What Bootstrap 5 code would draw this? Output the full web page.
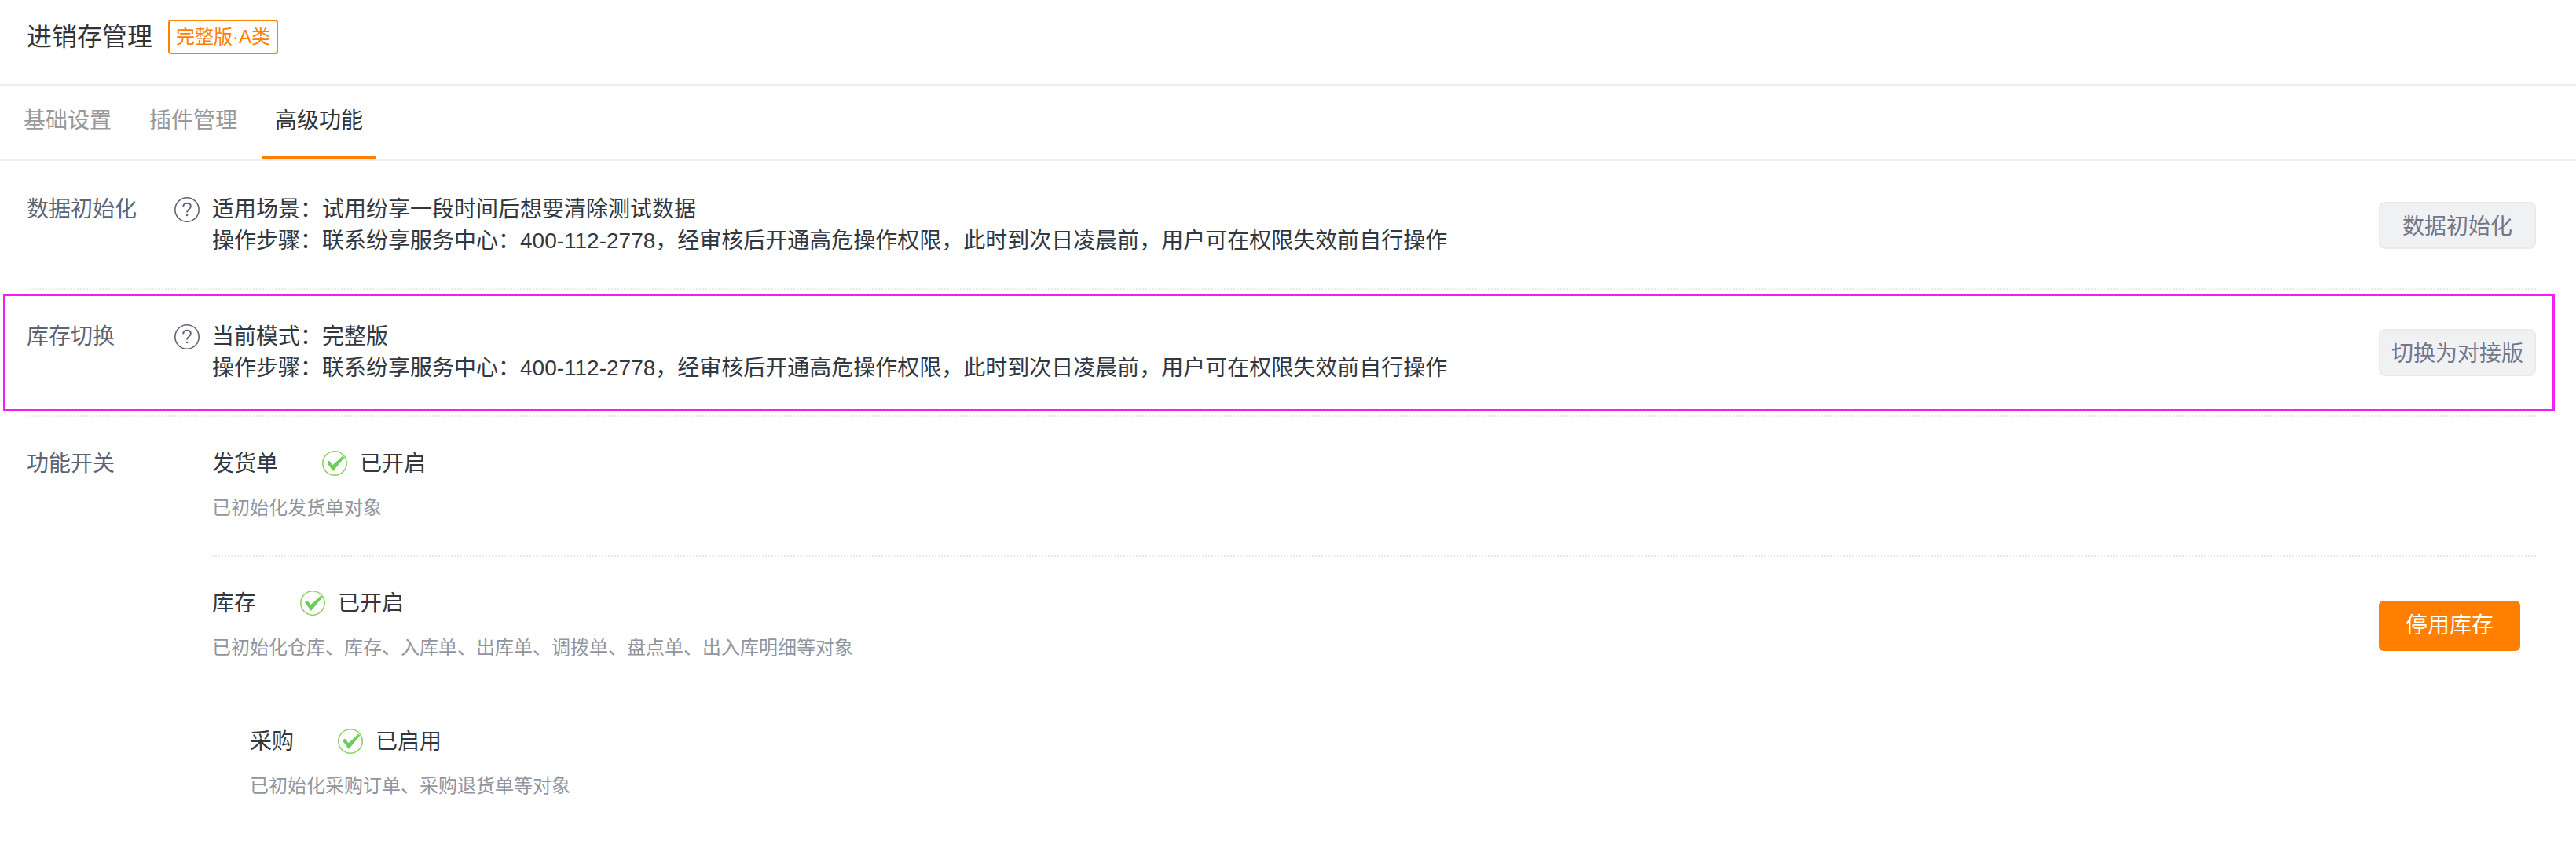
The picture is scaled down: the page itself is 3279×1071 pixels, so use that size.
<!DOCTYPE html>
<html lang="zh-CN">

<head>
  <meta charset="utf-8">
  <meta name="viewport" content="width=device-width">
  <title>进销存管理</title>
  <link href="https://cdn.jsdelivr.net/npm/bootstrap@5.3.3/dist/css/bootstrap.min.css" rel="stylesheet"/>
  <style>
    body {
      font-family: "Liberation Sans", "Noto Sans CJK SC", sans-serif;
      font-size: 28px;
      line-height: 40px;
      color: #333840;
      background: #fff;
    }
    .page-head { height: 109px; padding: 25px 34px 0; border-bottom: 2px solid #eee; }
    .page-title { font-size: 32px; line-height: 44px; font-weight: 400; color: #333; }
    .version-tag {
      height: 44px;
      margin-left: 20px;
      padding: 0 8px;
      font-size: 24px;
      line-height: 40px;
      color: #ff8000;
      border: 2px solid #ff8000;
      border-radius: 4px;
    }
    .page-tabs { height: 96px; padding: 0 14px; gap: 16px; border-bottom: 2px solid #eee; }
    .page-tabs .nav-link {
      height: 94px;
      padding: 25px 16px 0;
      color: #999;
      border-bottom: 4px solid transparent;
    }
    .page-tabs .nav-link.active { color: #333; border-bottom-color: #ff8000; }
    .settings { padding: 2px 51px 0 34px; }
    .setting-row { padding: 40px 0; }
    .dotted-line {
      height: 2px;
      background: repeating-linear-gradient(90deg, #eaeaec 0 2px, transparent 2px 4px);
    }
    .setting-label { width: 188px; color: #5f6472; }
    .help-cell { width: 48px; padding-top: 4px; }
    .highlight-box { inset: 5px -24px 5px -30px; border: 3px solid #f51df5; }
    .btn-side {
      width: 200px;
      height: 60px;
      padding: 3px 0 0;
      font-size: 28px;
      color: #737789;
      background: #f0f1f3;
      border: 2px solid #e9eaee;
      border-radius: 8px;
    }
    .btn-stop {
      width: 180px;
      height: 64px;
      margin-right: 20px;
      padding: 0;
      font-size: 28px;
      color: #fff;
      background: #ff8000;
      border: 0;
      border-radius: 6px;
    }
    .feature-row { padding: 40px 0; height: 176px; }
    .feature-row .state-icon { margin: 0 16px 2px 56px; }
    .feature-note { margin-top: 16px; font-size: 24px; color: #91959e; }
    .sub-feature { padding-left: 48px; }
    svg { display: block; }
  </style>
</head>

<body>

  <svg class="d-none">
    <symbol id="icon-help" viewBox="0 0 32 32">
      <circle cx="16" cy="16" r="15.2" fill="none" stroke="#5f6472" stroke-width="1.6"/>
      <path d="M11.2 12.4C11.3 9.5 13.1 7.8 16 7.8c2.9 0 4.8 1.6 4.8 4 0 1.9-1 2.9-2.5 4-1.5 1.1-2.2 1.9-2.2 3.7" fill="none" stroke="#5f6472" stroke-width="1.9"/>
      <circle cx="16.1" cy="23" r="1.3" fill="#5f6472"/>
    </symbol>
    <symbol id="icon-done" viewBox="0 0 32 32">
      <circle cx="16" cy="16" r="15.2" fill="none" stroke="#8fcf62" stroke-width="1.6"/>
      <path d="M6.5 15.2 9 13.2 13.6 18.6 26 7.4 27.8 8.6 14 25.4Z" fill="#6cce58" stroke="#6cce58" stroke-width="1"/>
    </symbol>
  </svg>

  <header class="page-head d-flex align-items-start">
    <h1 class="page-title mb-0">进销存管理</h1>
    <span class="version-tag">完整版·A类</span>
  </header>

  <nav class="page-tabs nav flex-nowrap">
    <a class="nav-link" href="#">基础设置</a>
    <a class="nav-link" href="#">插件管理</a>
    <a class="nav-link active" href="#">高级功能</a>
  </nav>

  <main class="settings">
    <section class="setting-row d-flex">
      <div class="setting-label">数据初始化</div>
      <div class="help-cell"><svg width="32" height="32"><use href="#icon-help"/></svg></div>
      <div class="flex-grow-1">
        <div>适用场景：试用纷享一段时间后想要清除测试数据</div>
        <div>操作步骤：联系纷享服务中心：400-112-2778，经审核后开通高危操作权限，此时到次日凌晨前，用户可在权限失效前自行操作</div>
      </div>
      <button class="btn btn-side align-self-center" type="button">数据初始化</button>
    </section>
    <div class="dotted-line"></div>

    <section class="setting-row d-flex position-relative">
      <div class="highlight-box position-absolute pe-none"></div>
      <div class="setting-label">库存切换</div>
      <div class="help-cell"><svg width="32" height="32"><use href="#icon-help"/></svg></div>
      <div class="flex-grow-1">
        <div>当前模式：完整版</div>
        <div>操作步骤：联系纷享服务中心：400-112-2778，经审核后开通高危操作权限，此时到次日凌晨前，用户可在权限失效前自行操作</div>
      </div>
      <button class="btn btn-side align-self-center" type="button">切换为对接版</button>
    </section>
    <div class="dotted-line"></div>

    <section class="d-flex">
      <div class="setting-label feature-row">功能开关</div>
      <div class="help-cell"></div>
      <div class="flex-grow-1">
        <div class="feature-row">
          <div class="d-flex align-items-center">
            <span>发货单</span>
            <svg class="state-icon" width="32" height="32"><use href="#icon-done"/></svg>
            <span>已开启</span>
          </div>
          <div class="feature-note">已初始化发货单对象</div>
        </div>
        <div class="dotted-line"></div>
        <div class="feature-row d-flex justify-content-between">
          <div>
            <div class="d-flex align-items-center">
              <span>库存</span>
              <svg class="state-icon" width="32" height="32"><use href="#icon-done"/></svg>
              <span>已开启</span>
            </div>
            <div class="feature-note">已初始化仓库、库存、入库单、出库单、调拨单、盘点单、出入库明细等对象</div>
          </div>
          <button class="btn btn-stop align-self-center" type="button">停用库存</button>
        </div>
        <div class="feature-row sub-feature">
          <div class="d-flex align-items-center">
            <span>采购</span>
            <svg class="state-icon" width="32" height="32"><use href="#icon-done"/></svg>
            <span>已启用</span>
          </div>
          <div class="feature-note">已初始化采购订单、采购退货单等对象</div>
        </div>
      </div>
    </section>
  </main>

  <script src="https://cdn.jsdelivr.net/npm/bootstrap@5.3.3/dist/js/bootstrap.bundle.min.js"></script>
</body>

</html>
